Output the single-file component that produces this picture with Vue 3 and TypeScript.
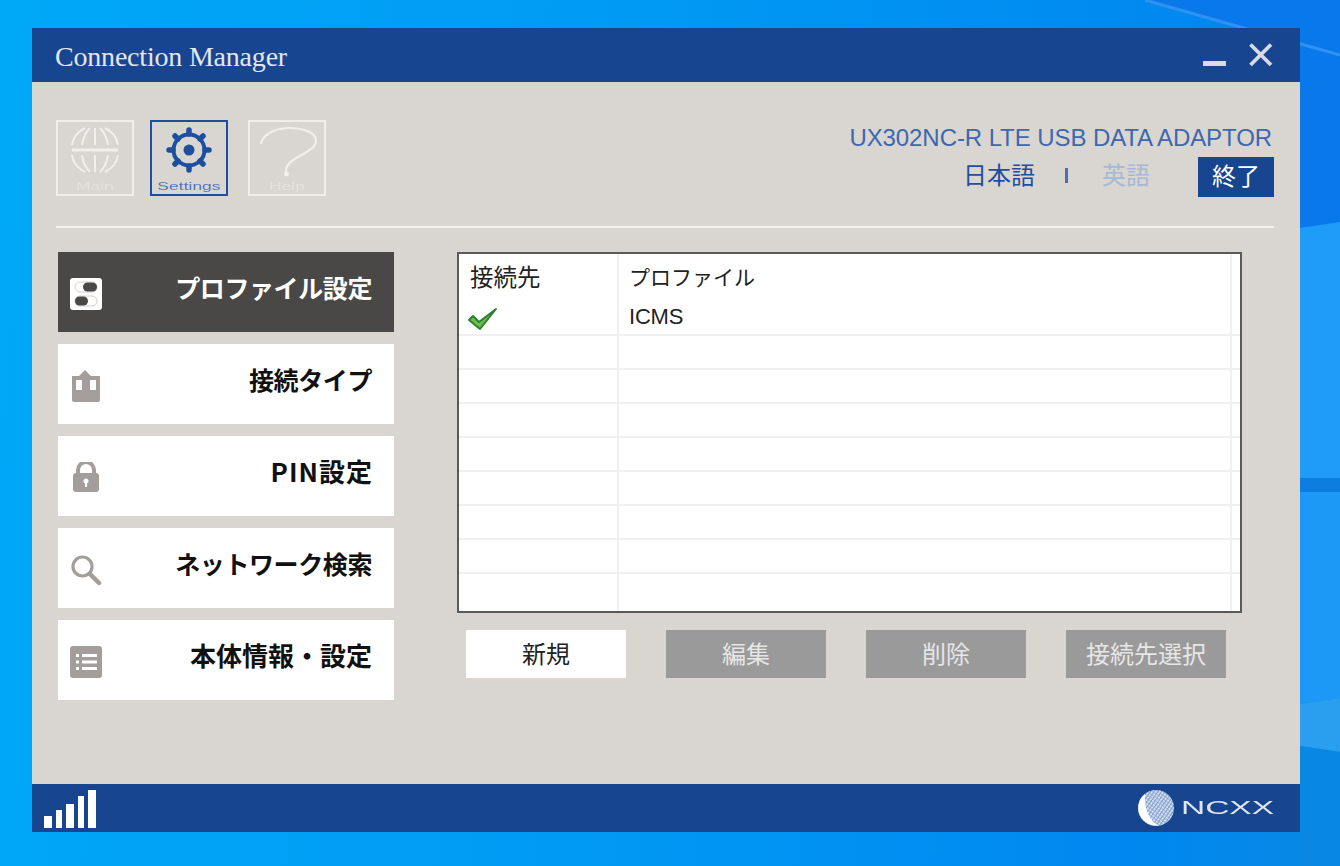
<script setup lang="ts">
const navItems = [
  { label: 'プロファイル設定', icon: 'profile', active: true, cls: '' },
  { label: '接続タイプ', icon: 'type', active: false, cls: '' },
  { label: 'PIN設定', icon: 'lock', active: false, cls: 'pin' },
  { label: 'ネットワーク検索', icon: 'search', active: false, cls: '' },
  { label: '本体情報・設定', icon: 'info', active: false, cls: 'full' },
]
const actions = [
  { label: '新規', on: true },
  { label: '編集', on: false },
  { label: '削除', on: false },
  { label: '接続先選択', on: false },
]
const bars = [12, 18, 24, 32, 38]
const rows = [0, 1, 2, 3, 4, 5, 6, 7, 8]
</script>

<template>
  <div class="desk">
    <svg class="wall" width="1340" height="866" viewBox="0 0 1340 866">
      <polygon points="1145,0 1340,0 1340,224 1300,228 1300,43" fill="#0878ea"/>
      <path d="M1145 0 1240 27 1340 55" stroke="#2f92f0" stroke-width="3" fill="none"/>
      <polygon points="1300,228 1340,222 1340,478 1300,478" fill="#1f9bf8"/>
      <polygon points="1300,478 1340,478 1340,492 1300,492" fill="#0b7ee0"/>
      <polygon points="1300,492 1340,492 1340,698 1300,704" fill="#1c98f6"/>
      <polygon points="1300,704 1340,698 1340,752 1300,746" fill="#2a9ff0"/>
      <polygon points="1300,746 1340,752 1340,866 1300,866" fill="#0888e2"/>
    </svg>
    <div class="win">
      <header class="title">
        <span class="title-text">Connection Manager</span>
        <div class="win-btns">
          <span class="min"></span>
          <svg class="close" width="26" height="26" viewBox="0 0 26 26"><path d="M2.5 2.5 23 23M23 2.5 2.5 23" stroke="#d9d9e8" stroke-width="3.8" fill="none"/></svg>
        </div>
      </header>

      <main class="body">
        <section class="top">
          <div class="tabs">
            <div class="tab">
              <svg width="56" height="52" viewBox="0 0 56 52" fill="none" stroke="#f1efec" stroke-width="2">
                <path d="M5 25H51" stroke-width="3"/>
                <path d="M5 20C6 12 12 6 18 3M15 20C16 13 19 7 23 3M28 3V20M51 20C50 12 44 6 38 3M41 20C40 13 37 7 33 3"/>
                <path d="M5 30C6 38 12 44 18 47M15 30C16 37 19 43 23 47M28 30V47M51 30C50 38 44 44 38 47M41 30C40 37 37 43 33 47"/>
              </svg>
              <span class="tab-label">Main</span>
            </div>
            <div class="tab sel">
              <svg width="56" height="52" viewBox="0 0 56 52">
                <circle cx="28" cy="25" r="15.5" fill="none" stroke="#1d4f9f" stroke-width="4"/>
                <circle cx="28" cy="25" r="5.5" fill="#1d4f9f"/>
                <path d="M28 5V9M28 45V41M8 25H12M48 25H44M14 11 17 14M42 11 39 14M14 39 17 36M42 39 39 36" stroke="#1d4f9f" stroke-width="5.5" stroke-linecap="round"/>
              </svg>
              <span class="tab-label">Settings</span>
            </div>
            <div class="tab">
              <svg class="q" width="56" height="52" viewBox="0 0 56 52" fill="none" stroke="#f1efec" stroke-width="2.2" stroke-linecap="round">
                <path d="M2 18C5 8 18 3 30 3C46 3 57 8 57 16C57 25 40 30 33 36C29 39 27 42 27 46"/>
                <circle cx="27.5" cy="49" r="1.4" fill="#f1efec"/>
              </svg>
              <span class="tab-label">Help</span>
            </div>
          </div>
          <div class="top-right">
            <div class="model">UX302NC-R LTE USB DATA ADAPTOR</div>
            <div class="lang">
              <span class="ja">日本語</span>
              <span class="sep"></span>
              <span class="en">英語</span>
              <span class="quit">終了</span>
            </div>
          </div>
        </section>
        <div class="rule"></div>

        <section class="content">
          <nav class="nav">
            <div v-for="item in navItems" :key="item.label" class="nav-item" :class="{ active: item.active }">
              <svg v-if="item.icon === 'profile'" class="ico" width="32" height="32" viewBox="0 0 32 32">
                <rect x="0" y="0" width="32" height="32" rx="3" fill="#fff"/>
                <rect x="5" y="4" width="22" height="10" rx="5" fill="#fff" stroke="#cfcfcf" stroke-width="1"/>
                <rect x="13" y="4.5" width="14" height="9" rx="4.5" fill="#4a4846"/>
                <rect x="5" y="18" width="22" height="10" rx="5" fill="#fff" stroke="#cfcfcf" stroke-width="1"/>
                <rect x="5" y="18.5" width="13" height="9" rx="4.5" fill="#4a4846"/>
              </svg>
              <svg v-else-if="item.icon === 'type'" class="ico" width="32" height="32" viewBox="0 0 32 32">
                <path d="M2 6H9L15 0 21 6H30V30A2 2 0 0 1 28 32H4A2 2 0 0 1 2 30Z" fill="#a39e9b"/>
                <rect x="6" y="10" width="6" height="10" fill="#fff"/>
                <rect x="20" y="10" width="6" height="10" fill="#fff"/>
              </svg>
              <svg v-else-if="item.icon === 'lock'" class="ico" width="32" height="32" viewBox="0 2 32 32">
                <path d="M8 14V10A8 8 0 0 1 24 10V14" fill="none" stroke="#a39e9b" stroke-width="4"/>
                <rect x="3" y="13" width="26" height="19" rx="3" fill="#a39e9b"/>
                <circle cx="16" cy="21" r="2.5" fill="#fff"/>
                <rect x="15" y="21" width="2" height="6" fill="#fff"/>
              </svg>
              <svg v-else-if="item.icon === 'search'" class="ico" width="32" height="32" viewBox="0 0 32 32" fill="none" stroke="#a39e9b">
                <circle cx="12.5" cy="12.5" r="9.5" stroke-width="3.2"/>
                <path d="M20 20 29 29" stroke-width="4.5" stroke-linecap="round"/>
              </svg>
              <svg v-else class="ico" width="32" height="32" viewBox="0 0 32 32">
                <rect x="0" y="0" width="32" height="32" rx="3" fill="#a39e9b"/>
                <g fill="#fff">
                  <rect x="6" y="8" width="3" height="3"/><rect x="12" y="8" width="15" height="3"/>
                  <rect x="6" y="14.5" width="3" height="3"/><rect x="12" y="14.5" width="15" height="3"/>
                  <rect x="6" y="21" width="3" height="3"/><rect x="12" y="21" width="15" height="3"/>
                </g>
              </svg>
              <span class="nav-label" :class="item.cls">{{ item.label }}</span>
            </div>
          </nav>

          <div class="panel">
            <div class="table">
              <div class="thead">
                <div class="c1">接続先</div>
                <div class="c2">プロファイル</div>
                <div class="c3"></div>
              </div>
              <div v-for="r in rows" :key="r" class="row" :class="{ first: r === 0, last: r === 8 }">
                <div class="c1">
                  <svg v-if="r === 0" width="32" height="24" viewBox="0 0 32 24">
                    <path d="M2 13 6 9 12 15 29 2 13 22Z" fill="#6cc04a" stroke="#2f7d35" stroke-width="2" stroke-linejoin="round"/>
                  </svg>
                </div>
                <div class="c2"><span v-if="r === 0" class="icms">ICMS</span></div>
                <div class="c3"></div>
              </div>
            </div>
            <div class="actions">
              <button v-for="a in actions" :key="a.label" class="action" :class="{ on: a.on }">{{ a.label }}</button>
            </div>
          </div>
        </section>
      </main>

      <footer class="foot">
        <div class="bars">
          <span v-for="(h, i) in bars" :key="i" class="bar" :class="{ wide: i % 2 === 0 }" :style="{ height: h + 'px' }"></span>
        </div>
        <div class="brand">
          <svg width="38" height="38" viewBox="0 0 38 38">
            <defs>
              <pattern id="mesh" width="3" height="3" patternUnits="userSpaceOnUse" patternTransform="rotate(35)">
                <rect width="3" height="3" fill="#a9bfe0"/>
                <rect width="3" height="1.2" fill="#e9eef8"/>
                <rect width="1" height="3" fill="#7f9ccb"/>
              </pattern>
            </defs>
            <circle cx="19" cy="19" r="18" fill="url(#mesh)"/>
            <path d="M8 5C-2 13-1 29 12 35c3 1.3 7 2 10 1.5C13 33 7 20 8 5z" fill="#fff"/>
          </svg>
          <span class="ncxx">NCXX</span>
        </div>
      </footer>
    </div>
  </div>
</template>

<style>
html, body { margin: 0; padding: 0; }
</style>

<style scoped>
.desk {
  position: relative;
  box-sizing: border-box;
  width: 1340px;
  height: 866px;
  padding: 28px 40px 34px 32px;
  overflow: hidden;
  background: linear-gradient(95deg, #00a8f8 0%, #009cf4 40%, #0088f0 85%, #0888e4 100%);
}
.wall { position: absolute; left: 0; top: 0; display: block; }
.win {
  position: relative;
  display: flex;
  flex-direction: column;
  height: 100%;
  background: #d9d5d1;
  font-family: "Noto Sans CJK JP", "Liberation Sans", sans-serif;
  filter: blur(.45px);
}
.title {
  flex: 0 0 54px;
  display: flex;
  align-items: center;
  justify-content: space-between;
  padding: 0 26px 0 23px;
  background: #17458f;
}
.title-text {
  font-family: "Liberation Serif", serif;
  font-size: 28px;
  line-height: 32px;
  margin-top: 4px;
  color: #e4e6ee;
  letter-spacing: -.2px;
}
.win-btns { display: flex; align-items: flex-end; gap: 22px; }
.min { width: 23px; height: 5px; margin-bottom: 3px; background: #d9d9e8; }
.close { display: block; margin-bottom: 1px; }
.body { flex: 1; display: flex; flex-direction: column; padding: 38px 26px 0 24px; }
.top { display: flex; justify-content: space-between; height: 106px; }
.tabs { display: flex; gap: 16px; height: 76px; }
.tab {
  box-sizing: border-box;
  width: 78px;
  height: 76px;
  border: 2px solid #f0eeeb;
  display: flex;
  flex-direction: column;
  align-items: center;
  padding-top: 3px;
  position: relative;
}
.tab.sel { border-color: #1d4f9f; margin-right: 4px; }
.tab svg { display: block; }
.tab svg.q { overflow: visible; }
.tab-label {
  position: absolute;
  left: 0;
  right: 0;
  bottom: 2px;
  text-align: center;
  font-family: "Liberation Sans", sans-serif;
  font-size: 10px;
  line-height: 11px;
  color: #e4e1de;
  transform: scaleX(1.75);
}
.tab.sel .tab-label { color: #4f78b8; }
.top-right { display: flex; flex-direction: column; align-items: flex-end; }
.model {
  font-family: "Liberation Sans", sans-serif;
  font-size: 24px;
  line-height: 28px;
  margin-top: 4px;
  margin-right: 2px;
  color: #3d68ae;
  letter-spacing: -.08px;
}
.lang { display: flex; align-items: center; margin-top: 5px; height: 40px; }
.ja, .en { font-size: 24px; padding-bottom: 7px; }
.ja { color: #1d4f9f; }
.sep { width: 3px; height: 15px; background: #4a6fab; margin: 0 34px 4px 30px; }
.en { color: #a6b8d6; }
.quit {
  box-sizing: border-box;
  width: 76px;
  height: 40px;
  margin-left: 48px;
  background: #17458f;
  color: #fff;
  font-size: 24px;
  line-height: 36px;
  text-align: center;
}
.rule { height: 2px; background: #f3f1ee; margin-bottom: 24px; }
.content { display: flex; }
.nav { width: 336px; margin-left: 2px; display: flex; flex-direction: column; gap: 12px; }
.nav-item {
  height: 80px;
  display: flex;
  align-items: center;
  justify-content: space-between;
  padding: 0 22px 0 12px;
  box-sizing: border-box;
  background: #fff;
  color: #111;
}
.nav-item.active { background: #4a4846; color: #fff; }
.ico { display: block; margin-top: 3px; }
.nav-label { font-size: 25px; line-height: 30px; margin-bottom: 10px; font-weight: 700; letter-spacing: -.4px; }
.nav-label.pin { font-size: 26px; letter-spacing: 1px; margin-right: -1px; }
.nav-label.full { font-size: 26px; letter-spacing: 0; }
.panel { margin-left: 63px; width: 784px; }
.table {
  box-sizing: border-box;
  width: 785px;
  height: 361px;
  border: 2px solid #5a5a5a;
  background: #fff;
  overflow: hidden;
  font-size: 21px;
  color: #222;
}
.thead, .row { display: flex; }
.thead { height: 46px; line-height: 44px; }
.thead .c1 { font-size: 23.5px; }
.row { height: 34px; box-sizing: border-box; border-bottom: 2px solid #f0f0f0; }
.row.first { height: 36px; }
.row.last { height: 37px; border-bottom: 0; }
.c1 { width: 160px; box-sizing: border-box; padding-left: 11px; border-right: 2px solid #f0f0f0; }
.c2 { flex: 1; padding-left: 10px; border-right: 2px solid #f0f0f0; }
.c3 { width: 8px; }
.row .c1 svg { display: block; margin: 7px 0 0 -3px; }
.icms { font-family: "Liberation Sans", sans-serif; font-size: 22px; line-height: 26px; display: block; margin-top: 4px; letter-spacing: -.2px; }
.actions { display: flex; gap: 40px; margin: 17px 0 0 9px; }
.action {
  width: 160px;
  height: 48px;
  border: 0;
  padding: 0 0 4px;
  background: #9a9a9a;
  color: #e6e6e6;
  font-family: inherit;
  font-size: 24px;
}
.action.on { background: #fff; color: #222; }
.foot {
  flex: 0 0 48px;
  display: flex;
  justify-content: space-between;
  align-items: center;
  padding: 0 25px 0 12px;
  background: #17458f;
}
.bars { display: flex; align-items: flex-end; gap: 4px; height: 38px; margin-top: 2px; }
.bar { width: 6px; background: #fff; }
.bar.wide { width: 8px; }
.brand { display: flex; align-items: center; gap: 6px; }
.brand svg { display: block; }
.ncxx {
  display: block;
  width: 94px;
  font-family: "Liberation Sans", sans-serif;
  font-size: 18px;
  line-height: 22px;
  color: #dfe6f2;
  transform: scaleX(1.86);
  transform-origin: left center;
  white-space: nowrap;
}
</style>
